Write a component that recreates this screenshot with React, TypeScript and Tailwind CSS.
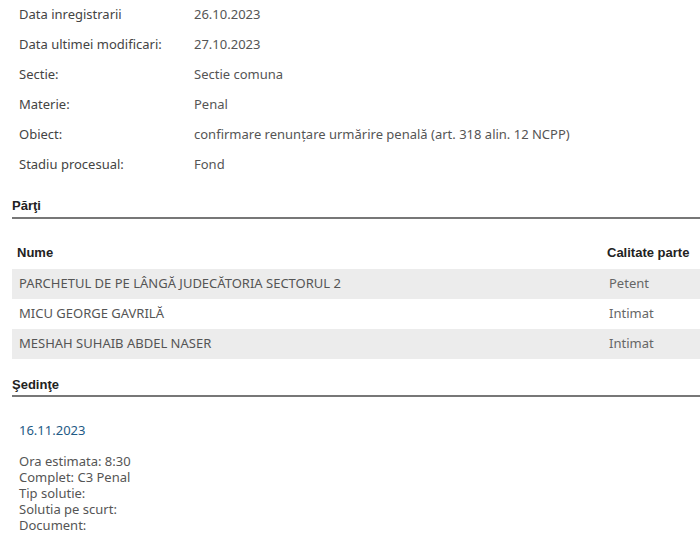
const info = [
  ["Data inregistrarii", "26.10.2023"],
  ["Data ultimei modificari:", "27.10.2023"],
  ["Sectie:", "Sectie comuna"],
  ["Materie:", "Penal"],
  ["Obiect:", "confirmare renunțare urmărire penală (art. 318 alin. 12 NCPP)"],
  ["Stadiu procesual:", "Fond"],
];

const parti = [
  ["PARCHETUL DE PE LÂNGĂ JUDECĂTORIA SECTORUL 2", "Petent"],
  ["MICU GEORGE GAVRILĂ", "Intimat"],
  ["MESHAH SUHAIB ABDEL NASER", "Intimat"],
];

const sedinta = [
  "Ora estimata: 8:30",
  "Complet: C3 Penal",
  "Tip solutie:",
  "Solutia pe scurt:",
  "Document:",
];

const SectionTitle = ({ title }: { title: string }) => (
  <div className="ml-3 border-b-2 border-[#777] pb-[1px] text-[13px] font-bold text-[#222] font-['Liberation_Sans',Arial,sans-serif]">
    {title}
  </div>
);

export default function App() {
  return (
    <div className="w-[700px] h-[537px] overflow-hidden bg-white text-[13px] text-[#555] font-['Noto_Sans',sans-serif]">
      <div className="flex flex-col">
        {info.map(([label, value]) => (
          <div key={label} className="flex h-[30px] items-center pl-[19px]">
            <div className="w-[175px] text-[#444]">{label}</div>
            <div>{value}</div>
          </div>
        ))}
      </div>

      <div className="mt-[16px]">
        <SectionTitle title="Părţi" />
      </div>

      <div className="ml-3 mt-[18px]">
        <div className="flex h-[32px] items-center px-[5px] text-[13px] font-bold text-[#222] font-['Liberation_Sans',Arial,sans-serif]">
          <div className="flex-1">Nume</div>
          <div className="w-[88px]">Calitate parte</div>
        </div>
        {parti.map(([name, role], i) => (
          <div
            key={name}
            className={`flex h-[30px] items-center px-[7px] ${i % 2 === 0 ? "bg-[#ececec]" : "bg-white"}`}
          >
            <div className="flex-1">{name}</div>
            <div className="w-[84px] text-[#666]">{role}</div>
          </div>
        ))}
      </div>

      <div className="mt-[16px]">
        <SectionTitle title="Şedinţe" />
      </div>

      <div className="pl-[19px] pt-[24px]">
        <div className="text-[#1f5b86]">16.11.2023</div>
        <div className="mt-[12px] flex flex-col leading-[16px]">
          {sedinta.map((line) => (
            <div key={line}>{line}</div>
          ))}
        </div>
      </div>
    </div>
  );
}
